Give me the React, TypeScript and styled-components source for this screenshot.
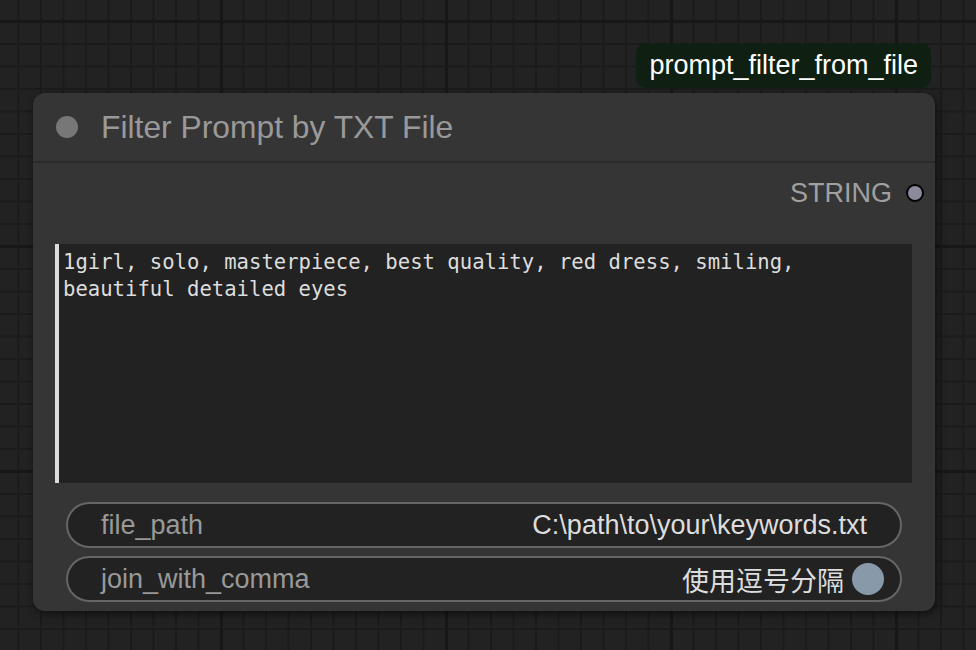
import React from "react";
import styled, { createGlobalStyle } from "styled-components";

const GlobalStyle = createGlobalStyle`
  html, body {
    margin: 0;
    padding: 0;
    background: #222;
  }
  body {
    font-family: "Liberation Sans", Arial, sans-serif;
  }
`;

const Canvas = styled.div`
  position: relative;
  width: 976px;
  height: 650px;
  overflow: hidden;
  background-color: #222222;
  background-image: linear-gradient(to right, #171717 3px, transparent 3px),
    linear-gradient(to bottom, #171717 3px, transparent 3px),
    linear-gradient(to right, #1b1b1b 2px, transparent 2px),
    linear-gradient(to bottom, #1b1b1b 2px, transparent 2px);
  background-size: 225px 225px, 225px 225px, 22.5px 22.5px, 22.5px 22.5px;
  background-position: 220px 0, 0 20px, 17.5px 0, 0 20.5px;
`;

const Node = styled.div`
  position: absolute;
  left: 33px;
  top: 93px;
  width: 902px;
  display: flex;
  flex-direction: column;
  background: #353535;
  border-radius: 12px;
  box-shadow: 2px 3px 8px rgba(0, 0, 0, 0.55);
`;

const Badge = styled.div`
  position: absolute;
  right: 4px;
  top: -50px;
  height: 45px;
  padding: 0 13px;
  display: flex;
  align-items: center;
  background: #0f1f11;
  border-radius: 10px;
  color: #ffffff;
  font-size: 27px;
  white-space: nowrap;
`;

const Title = styled.div`
  height: 68px;
  display: flex;
  align-items: center;
  gap: 23px;
  padding-left: 23px;
  border-bottom: 2px solid #2b2b2b;
`;

const TitleDot = styled.div`
  width: 22px;
  height: 22px;
  border-radius: 50%;
  background: #777777;
`;

const TitleText = styled.span`
  font-size: 31.8px;
  color: #999999;
`;

const Body = styled.div`
  display: flex;
  flex-direction: column;
  padding: 7px 0 9px;
`;

const OutputRow = styled.div`
  height: 46px;
  display: flex;
  justify-content: flex-end;
  align-items: center;
  gap: 14px;
  padding-right: 11px;
`;

const OutputLabel = styled.span`
  font-size: 27px;
  color: #a0a0a0;
`;

const Slot = styled.div`
  width: 18px;
  height: 18px;
  box-sizing: border-box;
  border-radius: 50%;
  border: 2px solid #000;
  background: #8a8a9c;
`;

const PromptBox = styled.div`
  margin: 28px 23px 0 22px;
  height: 239px;
  box-sizing: border-box;
  border-left: 4px solid #dcdcdc;
  padding: 5px 4px;
  background: #222222;
  color: #dddddd;
  font-family: "DejaVu Sans Mono", "Liberation Mono", monospace;
  font-size: 20.6px;
  line-height: 27px;
`;

const Widgets = styled.div`
  display: flex;
  flex-direction: column;
  gap: 8px;
  margin-top: 19px;
  padding: 0 33px;
`;

type PillProps = {
  $toggle?: boolean;
};

const Pill = styled.div<PillProps>`
  height: 46px;
  box-sizing: border-box;
  display: flex;
  align-items: center;
  justify-content: space-between;
  padding: 0 ${(p) => (p.$toggle ? "16px" : "33px")} 0 33px;
  border: 2px solid #666666;
  border-radius: 23px;
  background: #222222;
  font-size: 27px;
`;

const WidgetLabel = styled.span`
  color: #999999;
`;

const WidgetValue = styled.span`
  display: flex;
  align-items: center;
  gap: 8px;
  color: #dddddd;
  font-family: "Liberation Sans", "Noto Sans CJK SC", sans-serif;
`;

const ToggleDot = styled.span`
  width: 32px;
  height: 32px;
  border-radius: 50%;
  background: #8899a9;
`;

const App: React.FC = () => {
  return (
    <>
      <GlobalStyle />
      <Canvas>
        <Node>
          <Badge>prompt_filter_from_file</Badge>
          <Title>
            <TitleDot />
            <TitleText>Filter Prompt by TXT File</TitleText>
          </Title>
          <Body>
            <OutputRow>
              <OutputLabel>STRING</OutputLabel>
              <Slot />
            </OutputRow>
            <PromptBox>
              1girl, solo, masterpiece, best quality, red dress, smiling,
              beautiful detailed eyes
            </PromptBox>
            <Widgets>
              <Pill>
                <WidgetLabel>file_path</WidgetLabel>
                <WidgetValue>C:\path\to\your\keywords.txt</WidgetValue>
              </Pill>
              <Pill $toggle>
                <WidgetLabel>join_with_comma</WidgetLabel>
                <WidgetValue>
                  使用逗号分隔
                  <ToggleDot />
                </WidgetValue>
              </Pill>
            </Widgets>
          </Body>
        </Node>
      </Canvas>
    </>
  );
};

export default App;
